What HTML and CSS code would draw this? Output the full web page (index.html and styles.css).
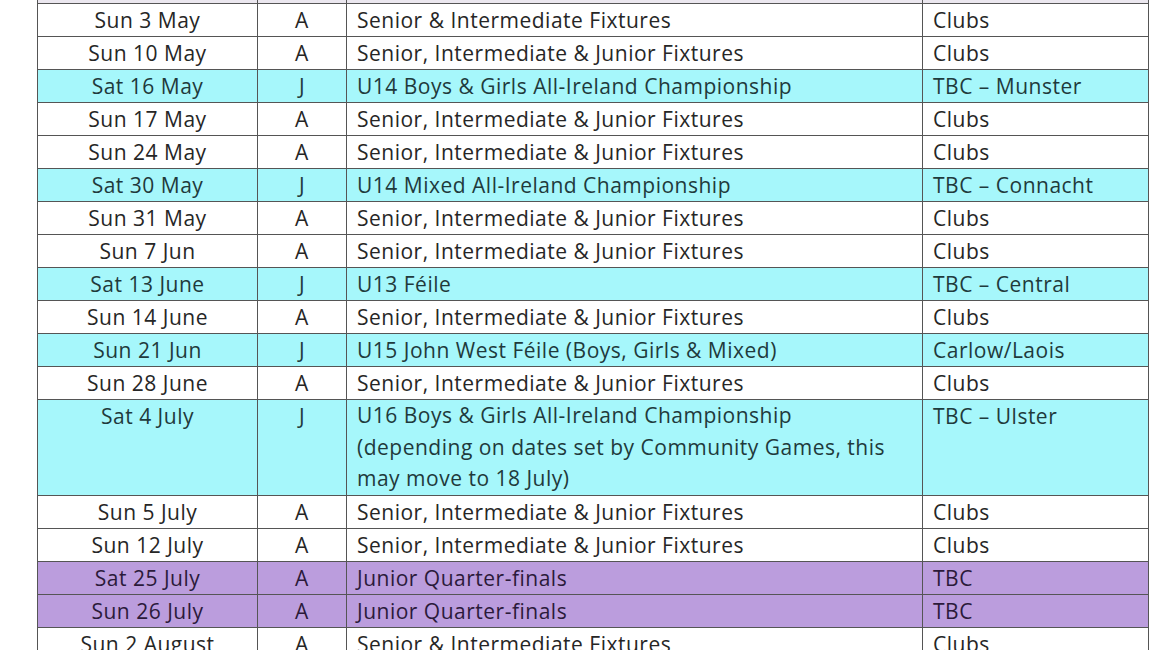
FILE: index.html
```html
<!DOCTYPE html>
<html>
<head>
<meta charset="utf-8">
<link rel="stylesheet" href="styles.css">
</head>
<body>
<table class="fixtures">
  <colgroup>
    <col class="c-date"><col class="c-type"><col class="c-desc"><col class="c-venue">
  </colgroup>
  <tr class="prev"><td></td><td></td><td></td><td></td></tr>
  <tr><td class="date">Sun 3 May</td><td class="type">A</td><td class="desc">Senior &amp; Intermediate Fixtures</td><td class="venue">Clubs</td></tr>
  <tr><td class="date">Sun 10 May</td><td class="type">A</td><td class="desc">Senior, Intermediate &amp; Junior Fixtures</td><td class="venue">Clubs</td></tr>
  <tr class="juv"><td class="date">Sat 16 May</td><td class="type">J</td><td class="desc">U14 Boys &amp; Girls All-Ireland Championship</td><td class="venue">TBC – Munster</td></tr>
  <tr><td class="date">Sun 17 May</td><td class="type">A</td><td class="desc">Senior, Intermediate &amp; Junior Fixtures</td><td class="venue">Clubs</td></tr>
  <tr><td class="date">Sun 24 May</td><td class="type">A</td><td class="desc">Senior, Intermediate &amp; Junior Fixtures</td><td class="venue">Clubs</td></tr>
  <tr class="juv"><td class="date">Sat 30 May</td><td class="type">J</td><td class="desc">U14 Mixed All-Ireland Championship</td><td class="venue">TBC – Connacht</td></tr>
  <tr><td class="date">Sun 31 May</td><td class="type">A</td><td class="desc">Senior, Intermediate &amp; Junior Fixtures</td><td class="venue">Clubs</td></tr>
  <tr><td class="date">Sun 7 Jun</td><td class="type">A</td><td class="desc">Senior, Intermediate &amp; Junior Fixtures</td><td class="venue">Clubs</td></tr>
  <tr class="juv"><td class="date">Sat 13 June</td><td class="type">J</td><td class="desc">U13 Féile</td><td class="venue">TBC – Central</td></tr>
  <tr><td class="date">Sun 14 June</td><td class="type">A</td><td class="desc">Senior, Intermediate &amp; Junior Fixtures</td><td class="venue">Clubs</td></tr>
  <tr class="juv"><td class="date">Sun 21 Jun</td><td class="type">J</td><td class="desc">U15 John West Féile (Boys, Girls &amp; Mixed)</td><td class="venue">Carlow/Laois</td></tr>
  <tr><td class="date">Sun 28 June</td><td class="type">A</td><td class="desc">Senior, Intermediate &amp; Junior Fixtures</td><td class="venue">Clubs</td></tr>
  <tr class="juv tall"><td class="date">Sat 4 July</td><td class="type">J</td><td class="desc">U16 Boys &amp; Girls All-Ireland Championship<br>(depending on dates set by Community Games, this<br>may move to 18 July)</td><td class="venue">TBC – Ulster</td></tr>
  <tr><td class="date">Sun 5 July</td><td class="type">A</td><td class="desc">Senior, Intermediate &amp; Junior Fixtures</td><td class="venue">Clubs</td></tr>
  <tr><td class="date">Sun 12 July</td><td class="type">A</td><td class="desc">Senior, Intermediate &amp; Junior Fixtures</td><td class="venue">Clubs</td></tr>
  <tr class="qf"><td class="date">Sat 25 July</td><td class="type">A</td><td class="desc">Junior Quarter-finals</td><td class="venue">TBC</td></tr>
  <tr class="qf"><td class="date">Sun 26 July</td><td class="type">A</td><td class="desc">Junior Quarter-finals</td><td class="venue">TBC</td></tr>
  <tr><td class="date">Sun 2 August</td><td class="type">A</td><td class="desc">Senior &amp; Intermediate Fixtures</td><td class="venue">Clubs</td></tr>
</table>
</body>
</html>
```

FILE: styles.css
```css
html, body {
  margin: 0;
  padding: 0;
  background: #ffffff;
  overflow: hidden;
}

body {
  font-family: "Open Sans", "Lato", sans-serif;
  font-size: 21px;
  letter-spacing: 0.5px;
  color: #262626;
}

.fixtures {
  border-collapse: collapse;
  margin: -30px 0 0 37px;
  table-layout: fixed;
  width: 1111px;
}

.c-date { width: 220px; }
.c-type { width: 89px; }
.c-desc { width: 576px; }
.c-venue { width: 226px; }

.fixtures td {
  border: 1px solid #555555;
  height: 32px;
  padding: 0;
  line-height: 32px;
  vertical-align: top;
  white-space: nowrap;
}

.fixtures .date,
.fixtures .type {
  text-align: center;
}

.fixtures .desc,
.fixtures .venue {
  padding-left: 10px;
}

.tall .desc {
  line-height: 31.7px;
}

.prev td {
  background: #ebe7ef;
}

.juv td {
  background: #a6f7fb;
  color: #1f3a3c;
}

.qf td {
  background: #bb9ddd;
  color: #2b1a3a;
}
```
